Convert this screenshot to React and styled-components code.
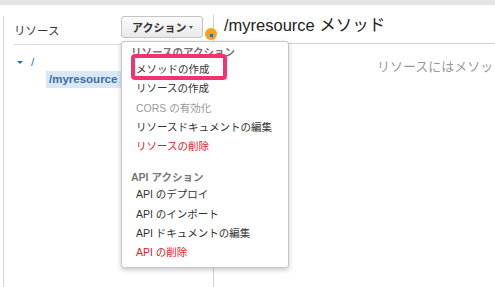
import React from "react";
import styled, { createGlobalStyle } from "styled-components";

const GlobalStyle = createGlobalStyle`
  html, body { margin: 0; padding: 0; background: #fff; overflow: hidden; }
  body {
    font-family: "Liberation Sans", "Noto Sans CJK JP", sans-serif;
    color: #333;
  }
`;

const Page = styled.div`
  width: 495px;
  height: 287px;
  display: flex;
  flex-direction: column;
  overflow: hidden;
`;

const TopBar = styled.div`
  height: 5px;
  background: #e5e5e5;
  flex-shrink: 0;
`;

const Main = styled.div`
  flex: 1;
  display: flex;
  min-height: 0;
`;

const LeftPanel = styled.div`
  width: 209px;
  flex-shrink: 0;
  margin-left: 3px;
  margin-top: 11px;
  border-left: 1px solid #d4d4d4;
`;

const LeftHeader = styled.div`
  height: 22px;
  margin: 0 10px;
  padding-bottom: 6px;
  border-bottom: 1px solid #dcdcdc;
  display: flex;
  align-items: flex-end;
  justify-content: space-between;
`;

const HeaderLabel = styled.span`
  font-size: 11.5px;
  line-height: 14px;
  color: #333;
`;

const ButtonWrap = styled.div`
  position: relative;
  align-self: flex-start;
`;

const ActionButton = styled.button`
  width: 82px;
  height: 22px;
  box-sizing: border-box;
  border: 1px solid #c5c5c5;
  border-radius: 3px;
  background: linear-gradient(#fbfbfb, #e9e9e9);
  font-family: inherit;
  font-size: 11px;
  font-weight: bold;
  color: #333;
  padding: 0 0 0 10px;
  display: flex;
  align-items: center;
  gap: 3px;
`;

const Caret = styled.span`
  width: 0;
  height: 0;
  border-left: 2.5px solid transparent;
  border-right: 2.5px solid transparent;
  border-top: 3px solid #555;
  margin-top: 1px;
`;

const Menu = styled.div`
  position: absolute;
  top: 25px;
  left: 0;
  width: 168px;
  box-sizing: border-box;
  background: #fff;
  border: 1px solid #c8c8c8;
  border-radius: 3px;
  box-shadow: 0 2px 5px rgba(0, 0, 0, 0.22);
  padding: 2px 0 4px;
  z-index: 10;
`;

const MenuHeader = styled.div`
  height: 16px;
  line-height: 16px;
  padding-left: 9px;
  font-size: 10.5px;
  font-weight: bold;
  color: #777;
  white-space: nowrap;
`;

const itemColors = { normal: "#333", disabled: "#999", danger: "#e0201f" };

const MenuItem = styled.div`
  height: 19.3px;
  line-height: 19.3px;
  padding-left: 14px;
  font-size: 10.5px;
  color: ${(p) => itemColors[p.$variant || "normal"]};
  white-space: nowrap;
`;

const MenuSpacer = styled.div`
  height: 13px;
`;

const Highlight = styled.div`
  position: absolute;
  left: 9px;
  top: 12px;
  width: 96px;
  height: 26px;
  box-sizing: border-box;
  border: 4px solid #f3326f;
  border-radius: 4px;
  pointer-events: none;
`;

const Tree = styled.div`
  padding-top: 8px;
`;

const TreeRow = styled.div`
  height: ${(p) => (p.$root ? 18 : 17)}px;
  display: flex;
  align-items: center;
  padding-left: ${(p) => (p.$root ? 13 : 42)}px;
`;

const Toggle = styled.span`
  width: 0;
  height: 0;
  border-left: 3px solid transparent;
  border-right: 3px solid transparent;
  border-top: 3.5px solid #1f6cc0;
  margin-right: 8px;
`;

const RootLabel = styled.span`
  font-size: 11.5px;
  color: #2c6fb7;
`;

const ResourceLabel = styled.span`
  display: inline-block;
  height: 17px;
  line-height: 17px;
  padding: 0 4px 0 3px;
  background: #d9e7f7;
  font-size: 11.5px;
  font-weight: bold;
  color: #3d6ca6;
`;

const RightPanel = styled.div`
  flex: 1;
  min-width: 0;
  margin-top: 10px;
  border-left: 1px solid #cfcfcf;
  position: relative;
`;

const TitleRow = styled.div`
  height: 28px;
  border-bottom: 1px solid #cfcfcf;
  padding-left: 10px;
  font-size: 16.5px;
  line-height: 20px;
  color: #222;
  white-space: nowrap;
  overflow: hidden;
`;

const EmptyNote = styled.div`
  padding: 16px 0 0 163px;
  font-size: 13px;
  line-height: 14px;
  color: #999;
  white-space: nowrap;
  overflow: hidden;
`;

const StatusDot = styled.span`
  position: absolute;
  left: -9px;
  top: 13px;
  width: 12px;
  height: 12px;
  border-radius: 50%;
  background: #f7a21b;
  display: flex;
  align-items: center;
  justify-content: center;
  z-index: 5;
  &::after {
    content: "";
    width: 3px;
    height: 3px;
    background: #1b6fd1;
    margin: 2px 0 0 1px;
  }
`;

const resourceActions = [
  { label: "メソッドの作成" },
  { label: "リソースの作成" },
  { label: "CORS の有効化", variant: "disabled" },
  { label: "リソースドキュメントの編集" },
  { label: "リソースの削除", variant: "danger" },
];

const apiActions = [
  { label: "API のデプロイ" },
  { label: "API のインポート" },
  { label: "API ドキュメントの編集" },
  { label: "API の削除", variant: "danger" },
];

export default function App() {
  return (
    <>
      <GlobalStyle />
      <Page>
        <TopBar />
        <Main>
          <LeftPanel>
            <LeftHeader>
              <HeaderLabel>リソース</HeaderLabel>
              <ButtonWrap>
                <ActionButton>
                  アクション
                  <Caret />
                </ActionButton>
                <Menu>
                  <MenuHeader>リソースのアクション</MenuHeader>
                  {resourceActions.map((a) => (
                    <MenuItem key={a.label} $variant={a.variant}>
                      {a.label}
                    </MenuItem>
                  ))}
                  <MenuSpacer />
                  <MenuHeader>API アクション</MenuHeader>
                  {apiActions.map((a) => (
                    <MenuItem key={a.label} $variant={a.variant}>
                      {a.label}
                    </MenuItem>
                  ))}
                  <Highlight />
                </Menu>
              </ButtonWrap>
            </LeftHeader>
            <Tree>
              <TreeRow $root>
                <Toggle />
                <RootLabel>/</RootLabel>
              </TreeRow>
              <TreeRow>
                <ResourceLabel>/myresource</ResourceLabel>
              </TreeRow>
            </Tree>
          </LeftPanel>
          <RightPanel>
            <StatusDot />
            <TitleRow>/myresource メソッド</TitleRow>
            <EmptyNote>リソースにはメソッドが定義されていません。</EmptyNote>
          </RightPanel>
        </Main>
      </Page>
    </>
  );
}
